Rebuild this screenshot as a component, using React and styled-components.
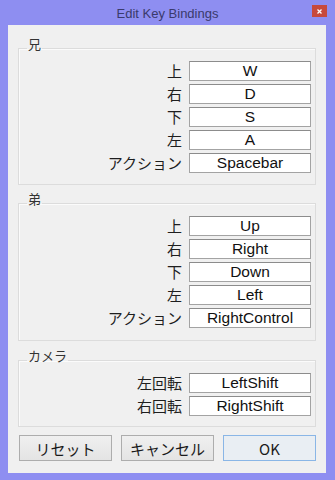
import React from 'react'
import styled, { createGlobalStyle } from 'styled-components'

const GlobalStyle = createGlobalStyle`
  html, body {
    margin: 0;
    padding: 0;
    background: #8e8ef1;
  }
`

const jp = `"Noto Sans CJK JP", "Liberation Sans", sans-serif`
const latin = `"Liberation Sans", "Noto Sans CJK JP", sans-serif`

const Frame = styled.div`
  width: 335px;
  height: 480px;
  box-sizing: border-box;
  background: #8e8ef1;
  padding: 0 9px 7px 8px;
  display: flex;
  flex-direction: column;
`

const TitleBar = styled.div`
  height: 25px;
  margin: 0 -9px 0 -8px;
  display: grid;
  grid-template-columns: 1fr auto 1fr;
  align-items: center;
`

const Title = styled.div`
  grid-column: 2;
  font-family: ${latin};
  font-size: 13px;
  color: #3a3a6c;
  padding-top: 1px;
`

const CloseButton = styled.div`
  grid-column: 3;
  justify-self: end;
  align-self: start;
  margin: 5px 8px 0 0;
  width: 15px;
  height: 12px;
  background: #c7493c;
  display: flex;
  align-items: center;
  justify-content: center;
`

const Client = styled.div`
  flex: 1;
  background: #f0f0f0;
  padding: 11px 10px 11px 10px;
  display: flex;
  flex-direction: column;
`

const Group = styled.fieldset`
  margin: 0 0 ${({ $gap }) => $gap}px 0;
  padding: 1px 4px ${({ $bottom }) => $bottom}px 0;
  border: 1px solid #dcdcdc;
  box-shadow: inset 1px 1px 0 #fbfbfb;
  min-inline-size: 0;
  display: flex;
  flex-direction: column;
  gap: 3px;
`

const Caption = styled.legend`
  margin-left: 8px;
  padding: 0 1px 8px;
  font-family: ${jp};
  font-size: 13px;
  line-height: 16px;
  color: #333;
`

const Row = styled.div`
  display: flex;
  justify-content: flex-end;
  align-items: center;
  gap: 7px;
`

const Label = styled.span`
  font-family: ${jp};
  font-size: 15px;
  line-height: 20px;
  color: #1e1e1e;
`

const KeyField = styled.div`
  width: 122px;
  height: 20px;
  box-sizing: border-box;
  border: 1px solid #a3a3a3;
  border-top-color: #8c8c8c;
  background: #fff;
  font-family: ${latin};
  font-size: 15.5px;
  line-height: 18px;
  text-align: center;
  color: #111;
`

const Buttons = styled.div`
  display: flex;
  justify-content: space-between;
  padding-left: 1px;
`

const Button = styled.button`
  width: 93px;
  height: 26px;
  box-sizing: border-box;
  margin: 0;
  padding: 0;
  border: 1px solid ${({ $primary }) => ($primary ? '#8ab6e6' : '#adadad')};
  background: ${({ $primary }) =>
    $primary ? '#e9eef3' : 'linear-gradient(#f0f0f0, #e4e4e4)'};
  font-family: ${jp};
  font-size: 15px;
  color: #1a1a1a;
`

const bindings = [
  {
    name: '兄',
    gap: 6,
    bottom: 11,
    rows: [
      ['上', 'W'],
      ['右', 'D'],
      ['下', 'S'],
      ['左', 'A'],
      ['アクション', 'Spacebar'],
    ],
  },
  {
    name: '弟',
    gap: 7,
    bottom: 12,
    rows: [
      ['上', 'Up'],
      ['右', 'Right'],
      ['下', 'Down'],
      ['左', 'Left'],
      ['アクション', 'RightControl'],
    ],
  },
  {
    name: 'カメラ',
    gap: 8,
    bottom: 10,
    rows: [
      ['左回転', 'LeftShift'],
      ['右回転', 'RightShift'],
    ],
  },
]

const App = () => {
  return (
    <>
      <GlobalStyle />
      <Frame>
        <TitleBar>
          <Title>Edit Key Bindings</Title>
          <CloseButton>
            <svg width="5" height="5" viewBox="0 0 5 5">
              <path d="M0.5 0.5 L4.5 4.5 M4.5 0.5 L0.5 4.5" stroke="#fff" strokeWidth="1.3" />
            </svg>
          </CloseButton>
        </TitleBar>
        <Client>
          {bindings.map((group) => (
            <Group key={group.name} $gap={group.gap} $bottom={group.bottom}>
              <Caption>{group.name}</Caption>
              {group.rows.map(([label, key]) => (
                <Row key={label}>
                  <Label>{label}</Label>
                  <KeyField>{key}</KeyField>
                </Row>
              ))}
            </Group>
          ))}
          <Buttons>
            <Button>リセット</Button>
            <Button>キャンセル</Button>
            <Button $primary>OK</Button>
          </Buttons>
        </Client>
      </Frame>
    </>
  )
}

export default App
